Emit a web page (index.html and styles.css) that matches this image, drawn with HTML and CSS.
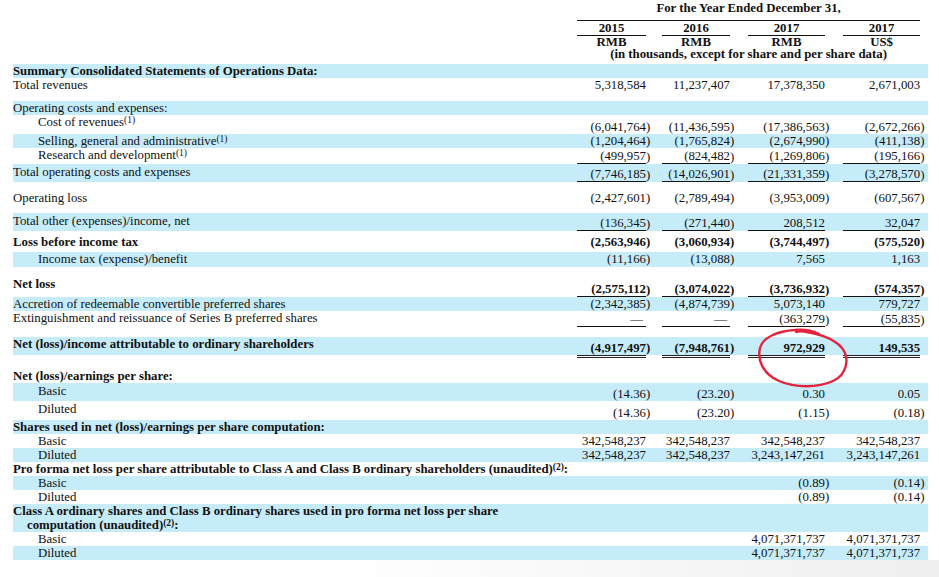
FILE: index.html
```html
<!DOCTYPE html>
<html>
<head>
<meta charset="utf-8">
<title>Summary Consolidated Statements of Operations Data</title>
<link rel="stylesheet" href="styles.css">
</head>
<body>
<div class="page">
<table class="fin">
<colgroup>
<col class="c-label"><col class="c-v1"><col class="c-p"><col class="c-g"><col class="c-v2"><col class="c-p5"><col class="c-g13"><col class="c-v3"><col class="c-p5"><col class="c-g13"><col class="c-v3"><col class="c-p5"><col class="c-end">
</colgroup>
<tbody>
<tr class="h21"><td></td><td colspan="10" class="hd hline">For the Year Ended December 31,</td><td colspan="2"></td></tr>
<tr class="h15"><td></td><td class="hd yr">2015</td><td></td><td></td><td class="hd yr">2016</td><td></td><td></td><td class="hd yr">2017</td><td></td><td></td><td class="hd yr">2017</td><td></td><td></td></tr>
<tr class="h12"><td></td><td class="hd cur">RMB</td><td></td><td></td><td class="hd cur">RMB</td><td></td><td></td><td class="hd cur">RMB</td><td></td><td></td><td class="hd cur">US$</td><td></td><td></td></tr>
<tr class="h16"><td></td><td colspan="10" class="hd sub">(in thousands, except for share and per share data)</td><td colspan="2"></td></tr>

<tr class="h14 b"><td colspan="13" class="l bold">Summary Consolidated Statements of Operations Data:</td></tr>
<tr class="h23"><td class="l">Total revenues</td><td class="v">5,318,584</td><td class="p"></td><td></td><td class="v">11,237,407</td><td class="p"></td><td></td><td class="v">17,378,350</td><td class="p"></td><td></td><td class="v">2,671,003</td><td class="p"></td><td></td></tr>
<tr class="h14 b"><td colspan="13" class="l">Operating costs and expenses:</td></tr>
<tr class="h19 vb"><td class="l i">Cost of revenues<span class="fn">(1)</span></td><td class="v">(6,041,764</td><td class="p">)</td><td></td><td class="v">(11,436,595</td><td class="p">)</td><td></td><td class="v">(17,386,563</td><td class="p">)</td><td></td><td class="v">(2,672,266</td><td class="p">)</td><td></td></tr>
<tr class="h14 b"><td class="l i">Selling, general and administrative<span class="fn">(1)</span></td><td class="v">(1,204,464</td><td class="p">)</td><td></td><td class="v">(1,765,824</td><td class="p">)</td><td></td><td class="v">(2,674,990</td><td class="p">)</td><td></td><td class="v">(411,138</td><td class="p">)</td><td></td></tr>
<tr class="h16 vb"><td class="l i">Research and development<span class="fn">(1)</span></td><td class="v u">(499,957</td><td class="p">)</td><td></td><td class="v u">(824,482</td><td class="p">)</td><td></td><td class="v u">(1,269,806</td><td class="p">)</td><td></td><td class="v u">(195,166</td><td class="p">)</td><td></td></tr>
<tr class="h18 b vb"><td class="l pt1">Total operating costs and expenses</td><td class="v u">(7,746,185</td><td class="p">)</td><td></td><td class="v u">(14,026,901</td><td class="p">)</td><td></td><td class="v u">(21,331,359</td><td class="p">)</td><td></td><td class="v u">(3,278,570</td><td class="p">)</td><td></td></tr>
<tr class="h31 vm"><td class="l">Operating loss</td><td class="v">(2,427,601</td><td class="p">)</td><td></td><td class="v">(2,789,494</td><td class="p">)</td><td></td><td class="v">(3,953,009</td><td class="p">)</td><td></td><td class="v">(607,567</td><td class="p">)</td><td></td></tr>
<tr class="h18 b vb"><td class="l pt1">Total other (expenses)/income, net</td><td class="v u">(136,345</td><td class="p">)</td><td></td><td class="v u">(271,440</td><td class="p">)</td><td></td><td class="v u">208,512</td><td class="p"></td><td></td><td class="v u">32,047</td><td class="p"></td><td></td></tr>
<tr class="h21 vm bold"><td class="l">Loss before income tax</td><td class="v">(2,563,946</td><td class="p">)</td><td></td><td class="v">(3,060,934</td><td class="p">)</td><td></td><td class="v">(3,744,497</td><td class="p">)</td><td></td><td class="v">(575,520</td><td class="p">)</td><td></td></tr>
<tr class="h15 b"><td class="l i">Income tax (expense)/benefit</td><td class="v">(11,166</td><td class="p">)</td><td></td><td class="v">(13,088</td><td class="p">)</td><td></td><td class="v">7,565</td><td class="p"></td><td></td><td class="v">1,163</td><td class="p"></td><td></td></tr>
<tr class="h30 vb bold"><td class="l pb6">Net loss</td><td class="v u">(2,575,112</td><td class="p">)</td><td></td><td class="v u">(3,074,022</td><td class="p">)</td><td></td><td class="v u">(3,736,932</td><td class="p">)</td><td></td><td class="v u">(574,357</td><td class="p">)</td><td></td></tr>
<tr class="h14 b"><td class="l">Accretion of redeemable convertible preferred shares</td><td class="v">(2,342,385</td><td class="p">)</td><td></td><td class="v">(4,874,739</td><td class="p">)</td><td></td><td class="v">5,073,140</td><td class="p"></td><td></td><td class="v">779,727</td><td class="p"></td><td></td></tr>
<tr class="h16 vb"><td class="l">Extinguishment and reissuance of Series B preferred shares</td><td class="v u dash">—</td><td class="p"></td><td></td><td class="v u dash">—</td><td class="p"></td><td></td><td class="v u">(363,279</td><td class="p">)</td><td></td><td class="v u">(55,835</td><td class="p">)</td><td></td></tr>
<tr class="h10"><td colspan="13"></td></tr>
<tr class="h18 b vb bold"><td class="l">Net (loss)/income attributable to ordinary shareholders</td><td class="v">(4,917,497</td><td class="p">)</td><td></td><td class="v">(7,948,761</td><td class="p">)</td><td></td><td class="v">972,929</td><td class="p"></td><td></td><td class="v">149,535</td><td class="p"></td><td></td></tr>
<tr class="h14"><td></td><td class="v dbl"></td><td></td><td></td><td class="v dbl"></td><td></td><td></td><td class="v dbl"></td><td></td><td></td><td class="v dbl"></td><td></td><td></td></tr>
<tr class="h14"><td colspan="13" class="l bold">Net (loss)/earnings per share:</td></tr>
<tr class="h18 b vb"><td class="l i pt1">Basic</td><td class="v">(14.36</td><td class="p">)</td><td></td><td class="v">(23.20</td><td class="p">)</td><td></td><td class="v">0.30</td><td class="p"></td><td></td><td class="v">0.05</td><td class="p"></td><td></td></tr>
<tr class="h19 vb"><td class="l i pt1">Diluted</td><td class="v">(14.36</td><td class="p">)</td><td></td><td class="v">(23.20</td><td class="p">)</td><td></td><td class="v">(1.15</td><td class="p">)</td><td></td><td class="v">(0.18</td><td class="p">)</td><td></td></tr>
<tr class="h14 b"><td colspan="13" class="l bold">Shares used in net (loss)/earnings per share computation:</td></tr>
<tr class="h14"><td class="l i">Basic</td><td class="v">342,548,237</td><td class="p"></td><td></td><td class="v">342,548,237</td><td class="p"></td><td></td><td class="v">342,548,237</td><td class="p"></td><td></td><td class="v">342,548,237</td><td class="p"></td><td></td></tr>
<tr class="h14 b"><td class="l i">Diluted</td><td class="v">342,548,237</td><td class="p"></td><td></td><td class="v">342,548,237</td><td class="p"></td><td></td><td class="v">3,243,147,261</td><td class="p"></td><td></td><td class="v">3,243,147,261</td><td class="p"></td><td></td></tr>
<tr class="h14"><td colspan="13" class="l bold">Pro forma net loss per share attributable to Class A and Class B ordinary shareholders (unaudited)<span class="fn">(2)</span>:</td></tr>
<tr class="h14 b"><td class="l i">Basic</td><td class="v"></td><td class="p"></td><td></td><td class="v"></td><td class="p"></td><td></td><td class="v">(0.89</td><td class="p">)</td><td></td><td class="v">(0.14</td><td class="p">)</td><td></td></tr>
<tr class="h14"><td class="l i">Diluted</td><td class="v"></td><td class="p"></td><td></td><td class="v"></td><td class="p"></td><td></td><td class="v">(0.89</td><td class="p">)</td><td></td><td class="v">(0.14</td><td class="p">)</td><td></td></tr>
<tr class="h28 b"><td colspan="13" class="l bold"><div>Class A ordinary shares and Class B ordinary shares used in pro forma net loss per share</div><div class="cont">computation (unaudited)<span class="fn">(2)</span>:</div></td></tr>
<tr class="h14"><td class="l i">Basic</td><td class="v"></td><td class="p"></td><td></td><td class="v"></td><td class="p"></td><td></td><td class="v">4,071,371,737</td><td class="p"></td><td></td><td class="v">4,071,371,737</td><td class="p"></td><td></td></tr>
<tr class="h14 b"><td class="l i">Diluted</td><td class="v"></td><td class="p"></td><td></td><td class="v"></td><td class="p"></td><td></td><td class="v">4,071,371,737</td><td class="p"></td><td></td><td class="v">4,071,371,737</td><td class="p"></td><td></td></tr>
</tbody>
</table>
<div class="shade"></div>
</div>
<svg class="mark" width="939" height="577" viewBox="0 0 939 577" aria-hidden="true">
<path d="M797 331 C815 332 834 338 842 348 C850 358 847 375 833 381 C818 388 795 388 779 381 C763 374 757 360 760 348 C763 337 778 331 795 330 C805 329 813 331 819 334" fill="none" stroke="#e3243c" stroke-width="2.4" stroke-linecap="round" stroke-linejoin="round"/>
<circle cx="797" cy="331" r="2.3" fill="#e3243c"/>
</svg>
</body>
</html>
```
FILE: styles.css
```css
* { box-sizing: border-box; }
html, body { margin: 0; padding: 0; background: #fff; }
body {
  font-family: "Liberation Serif", "Times New Roman", serif;
  font-size: 12.8px;
  line-height: 14px;
  color: #111;
  width: 939px;
  height: 577px;
  overflow: hidden;
  position: relative;
}
.page { padding-left: 13px; }
.fin {
  border-collapse: separate;
  border-spacing: 0;
  table-layout: fixed;
  width: 915px;
}
.c-label { width: 564px; }
.c-v1 { width: 69px; }
.c-p { width: 4px; }
.c-g { width: 12px; }
.c-v2 { width: 68px; }
.c-p5 { width: 5px; }
.c-g13 { width: 13px; }
.c-v3 { width: 77px; }
.c-end { width: 3px; }

.fin td { padding: 0; white-space: nowrap; vertical-align: top; }
.h10 { height: 10px; }
.h12 { height: 12px; }
.h14 { height: 14px; }
.h15 { height: 15px; }
.h16 { height: 16px; }
.h18 { height: 18px; }
.h19 { height: 19px; }
.h21 { height: 21px; }
.h23 { height: 23px; }
.h28 { height: 28px; }
.h30 { height: 30px; }
.h31 { height: 31px; }

.b td { background: #c6ecfa; }
.bold td, td.bold { font-weight: bold; }
.v { text-align: right; }
.p { text-align: left; }
.l.i { padding-left: 25px; }
.pt1 { padding-top: 1px !important; }
.pb6 { padding-bottom: 6px !important; }
.vb td.v, .vb td.p { vertical-align: bottom; }
.vm td { vertical-align: middle; }
.vb td.l.pb6 { vertical-align: bottom; }
.u { border-bottom: 1px solid #111; }
.dbl { border-top: 3px double #222; }
.dash { padding-right: 3px !important; }

.hd { font-weight: bold; text-align: center; }
.hline { padding-top: 1px !important; border-bottom: 1px solid #111; }
.yr { vertical-align: bottom !important; border-bottom: 1px solid #111; }
.cur { line-height: 12px; vertical-align: top; }
.sub { line-height: 12px; }

.cont { padding-left: 14px; }
.fn { font-size: 9.5px; line-height: 0; vertical-align: 3px; font-weight: inherit; }

.shade {
  height: 17px;
  background: linear-gradient(to right, rgba(238,238,238,0) 35%, #efefef 100%);
}
.mark { position: absolute; left: 0; top: 0; pointer-events: none; }
```
